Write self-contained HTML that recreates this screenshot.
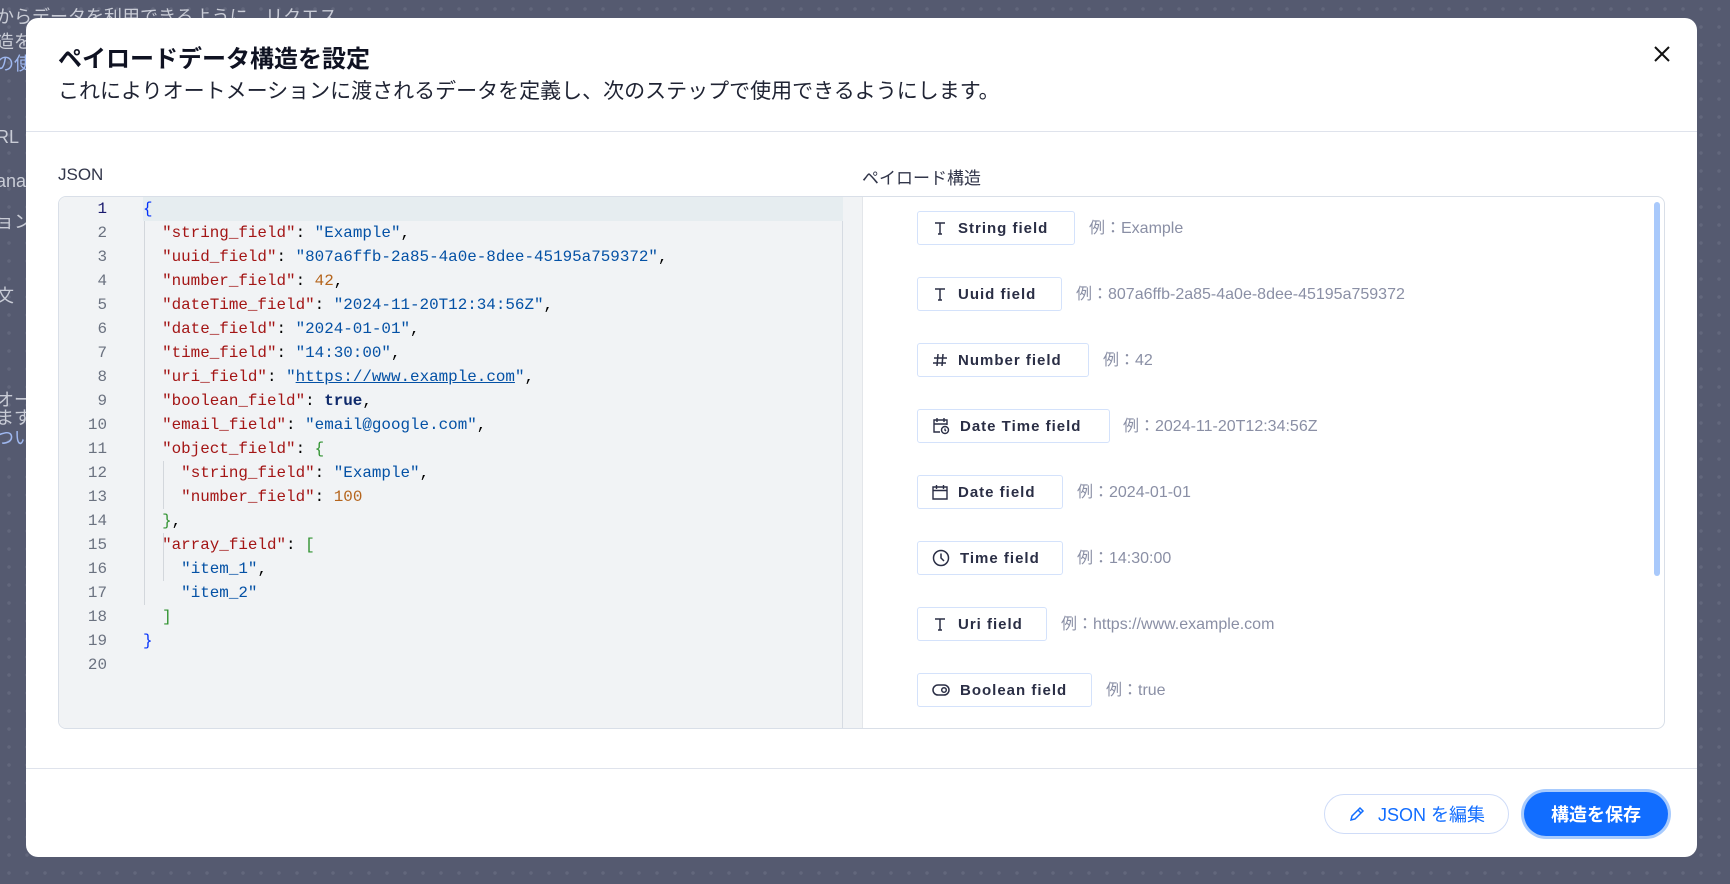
<!DOCTYPE html>
<html><head><meta charset="utf-8"><style>
*{box-sizing:border-box;margin:0;padding:0}
body{width:1730px;height:884px;overflow:hidden;position:relative;font-family:"Liberation Sans","Noto Sans CJK JP",sans-serif;background-color:#555a70;background-image:radial-gradient(circle,#62677c 1.5px,transparent 2px);background-size:18px 18px}
.bgt{position:absolute;left:0;color:#c9ccd6;font-size:18px;white-space:nowrap}
.modal{position:absolute;left:26px;top:18px;width:1671px;height:839px;background:#fff;border-radius:12px}
.title{position:absolute;left:32px;top:21px;font-size:24px;font-weight:bold;color:#0f1222}
.sub{position:absolute;left:32px;top:57px;font-size:21px;color:#1f2333}
.close{position:absolute;left:1627px;top:27px}
.hr{position:absolute;left:0;right:0;height:1px;background:#dfe3ec}
.lbl{position:absolute;font-size:17px;color:#32364a}
.box{position:absolute;left:32px;top:178px;width:1607px;height:533px;border:1px solid #d9dfe8;border-radius:8px;overflow:hidden}
.ed{position:absolute;left:0;top:0;width:784px;height:100%;background:#f1f3f5;border-right:1px solid #d6dbe2}
.gut{position:absolute;left:784px;top:0;width:20px;height:100%;background:#f1f3f5;border-right:1px solid #e3e6ea}
.ln{position:absolute;left:0;width:784px;height:24px;font-family:"Liberation Mono",monospace;font-size:15.9px;line-height:24px;white-space:pre}
.ln .n{position:absolute;right:736px;color:#6b7280;text-align:right}
.ln .c{position:absolute;left:84px}
.k{color:#a31515}.s{color:#0451a5}.num{color:#b5651d}.b1{color:#0431fa}.b2{color:#319331}.t{font-weight:bold;color:#0f2a6b}
.g{position:absolute;width:1px;background:#d3d7dc}
.chip{position:absolute;left:54px;height:34px;border:1px solid #d4e2fb;border-radius:3px;display:flex;align-items:center;padding-left:14px;font-size:15px;font-weight:bold;color:#2a2e45;letter-spacing:1px}
.chip svg{margin-right:10px}
.ex{position:absolute;font-size:16px;color:#8a8fa5;line-height:34px;white-space:nowrap}
.btn1{position:absolute;left:1298px;top:776px;width:185px;height:40px;border:1px solid #cfdcf8;border-radius:20px;color:#116dff;font-size:18px;display:flex;align-items:center;justify-content:center}
.btn2{position:absolute;left:1498px;top:774px;width:144px;height:44px;border-radius:22px;background:#116dff;color:#fff;font-size:18px;font-weight:bold;display:flex;align-items:center;justify-content:center;box-shadow:0 0 0 3px #a8cbfd}
</style></head><body>
<div class="bgt" style="top:3px;left:-4px">からデータを利用できるように、リクエス</div>
<div class="bgt" style="top:28px;left:-4px">造を</div>
<div class="bgt" style="top:50px;left:-4px;color:#9fb8f0">の使</div>
<div class="bgt" style="top:127px;left:-4px">RL</div>
<div class="bgt" style="top:171px;left:-4px">ana</div>
<div class="bgt" style="top:208px;left:-4px">ョン</div>
<div class="bgt" style="top:282px;left:-4px">文（</div>
<div class="bgt" style="top:386px;left:-4px">オー</div>
<div class="bgt" style="top:404px;left:-4px">ます</div>
<div class="bgt" style="top:424px;left:-4px;color:#9fb8f0">つい</div>
<div class="modal">
<div class="title">ペイロードデータ構造を設定</div>
<div class="sub">これによりオートメーションに渡されるデータを定義し、次のステップで使用できるようにします。</div>
<svg class="close" width="18" height="18" viewBox="0 0 18 18"><path d="M2 2L16 16M16 2L2 16" stroke="#111" stroke-width="2"/></svg>
<div class="hr" style="top:113px"></div>
<div class="lbl" style="left:32px;top:147px">JSON</div>
<div class="lbl" style="left:836px;top:146px">ペイロード構造</div>
<div class="box">
<div class="ed">
<div style="position:absolute;left:84px;top:0;width:720px;height:24px;background:#e6edf0"></div>
<div class="g" style="left:85px;top:24px;height:384px"></div>
<div class="g" style="left:104px;top:264px;height:48px"></div>
<div class="g" style="left:104px;top:336px;height:48px"></div>
<div class="ln" style="top:0"><span class="n" style="color:#1a1a6e">1</span><span class="c"><span class="b1">{</span></span></div>
<div class="ln" style="top:24px"><span class="n">2</span><span class="c">  <span class="k">"string_field"</span>: <span class="s">"Example"</span>,</span></div>
<div class="ln" style="top:48px"><span class="n">3</span><span class="c">  <span class="k">"uuid_field"</span>: <span class="s">"807a6ffb-2a85-4a0e-8dee-45195a759372"</span>,</span></div>
<div class="ln" style="top:72px"><span class="n">4</span><span class="c">  <span class="k">"number_field"</span>: <span class="num">42</span>,</span></div>
<div class="ln" style="top:96px"><span class="n">5</span><span class="c">  <span class="k">"dateTime_field"</span>: <span class="s">"2024-11-20T12:34:56Z"</span>,</span></div>
<div class="ln" style="top:120px"><span class="n">6</span><span class="c">  <span class="k">"date_field"</span>: <span class="s">"2024-01-01"</span>,</span></div>
<div class="ln" style="top:144px"><span class="n">7</span><span class="c">  <span class="k">"time_field"</span>: <span class="s">"14:30:00"</span>,</span></div>
<div class="ln" style="top:168px"><span class="n">8</span><span class="c">  <span class="k">"uri_field"</span>: <span class="s">"<u>https://www.example.com</u>"</span>,</span></div>
<div class="ln" style="top:192px"><span class="n">9</span><span class="c">  <span class="k">"boolean_field"</span>: <span class="t">true</span>,</span></div>
<div class="ln" style="top:216px"><span class="n">10</span><span class="c">  <span class="k">"email_field"</span>: <span class="s">"email@google.com"</span>,</span></div>
<div class="ln" style="top:240px"><span class="n">11</span><span class="c">  <span class="k">"object_field"</span>: <span class="b2">{</span></span></div>
<div class="ln" style="top:264px"><span class="n">12</span><span class="c">    <span class="k">"string_field"</span>: <span class="s">"Example"</span>,</span></div>
<div class="ln" style="top:288px"><span class="n">13</span><span class="c">    <span class="k">"number_field"</span>: <span class="num">100</span></span></div>
<div class="ln" style="top:312px"><span class="n">14</span><span class="c">  <span class="b2">}</span>,</span></div>
<div class="ln" style="top:336px"><span class="n">15</span><span class="c">  <span class="k">"array_field"</span>: <span class="b2">[</span></span></div>
<div class="ln" style="top:360px"><span class="n">16</span><span class="c">    <span class="s">"item_1"</span>,</span></div>
<div class="ln" style="top:384px"><span class="n">17</span><span class="c">    <span class="s">"item_2"</span></span></div>
<div class="ln" style="top:408px"><span class="n">18</span><span class="c">  <span class="b2">]</span></span></div>
<div class="ln" style="top:432px"><span class="n">19</span><span class="c"><span class="b1">}</span></span></div>
<div class="ln" style="top:456px"><span class="n">20</span><span class="c"></span></div>
</div>
<div class="gut"></div>
<div style="position:absolute;left:1595px;top:5px;width:6px;height:374px;border-radius:3px;background:#a9c9fb"></div>
<div style="position:absolute;left:804px;top:3px;right:0;height:100%">
<div class="chip" style="top:11px;width:158px"><svg width="16" height="16" viewBox="0 0 16 16" fill="none" stroke="#2a2e45" stroke-width="1.5"><path d="M3 3h10M8 3v11M6 14h4"/></svg>String field</div><div class="ex" style="left:226px;top:12px">例：Example</div>
<div class="chip" style="top:77px;width:145px"><svg width="16" height="16" viewBox="0 0 16 16" fill="none" stroke="#2a2e45" stroke-width="1.5"><path d="M3 3h10M8 3v11M6 14h4"/></svg>Uuid field</div><div class="ex" style="left:213px;top:78px">例：807a6ffb-2a85-4a0e-8dee-45195a759372</div>
<div class="chip" style="top:143px;width:172px"><svg width="16" height="16" viewBox="0 0 16 16" fill="none" stroke="#2a2e45" stroke-width="1.5"><path d="M6 2L5 14M11 2L10 14M2 6h13M1 11h13"/></svg>Number field</div><div class="ex" style="left:240px;top:144px">例：42</div>
<div class="chip" style="top:209px;width:193px"><svg width="18" height="18" viewBox="0 0 18 18" fill="none" stroke="#2a2e45" stroke-width="1.4"><path d="M8 15H2V3h13v5M2 7h13M5 1v4M12 1v4"/><circle cx="13" cy="13" r="3.5"/><path d="M13 11.5v1.7l1 .8"/></svg>Date Time field</div><div class="ex" style="left:260px;top:210px">例：2024-11-20T12:34:56Z</div>
<div class="chip" style="top:275px;width:146px"><svg width="16" height="16" viewBox="0 0 16 16" fill="none" stroke="#2a2e45" stroke-width="1.4"><path d="M1 3h14v12H1zM1 6.5h14M4.5 1v4M11.5 1v4"/></svg>Date field</div><div class="ex" style="left:214px;top:276px">例：2024-01-01</div>
<div class="chip" style="top:341px;width:146px"><svg width="18" height="18" viewBox="0 0 18 18" fill="none" stroke="#2a2e45" stroke-width="1.5"><circle cx="9" cy="9" r="7.5"/><path d="M9 4.5V9l3 3"/></svg>Time field</div><div class="ex" style="left:214px;top:342px">例：14:30:00</div>
<div class="chip" style="top:407px;width:130px"><svg width="16" height="16" viewBox="0 0 16 16" fill="none" stroke="#2a2e45" stroke-width="1.5"><path d="M3 3h10M8 3v11M6 14h4"/></svg>Uri field</div><div class="ex" style="left:198px;top:408px">例：https://www.example.com</div>
<div class="chip" style="top:473px;width:175px"><svg width="18" height="12" viewBox="0 0 18 12" fill="none" stroke="#2a2e45" stroke-width="1.5"><rect x="1" y="1" width="16" height="10" rx="5"/><circle cx="12" cy="6" r="2.3"/></svg>Boolean field</div><div class="ex" style="left:243px;top:474px">例：true</div>
</div>
</div>
<div class="hr" style="top:750px"></div>
<div class="btn1"><svg width="18" height="18" viewBox="0 0 18 18" fill="none" stroke="#116dff" stroke-width="1.5" style="margin-right:12px"><path d="M3 15l1-4 8-8 3 3-8 8zM10 5l3 3"/></svg>JSON を編集</div>
<div class="btn2">構造を保存</div>
</div>
</body></html>
